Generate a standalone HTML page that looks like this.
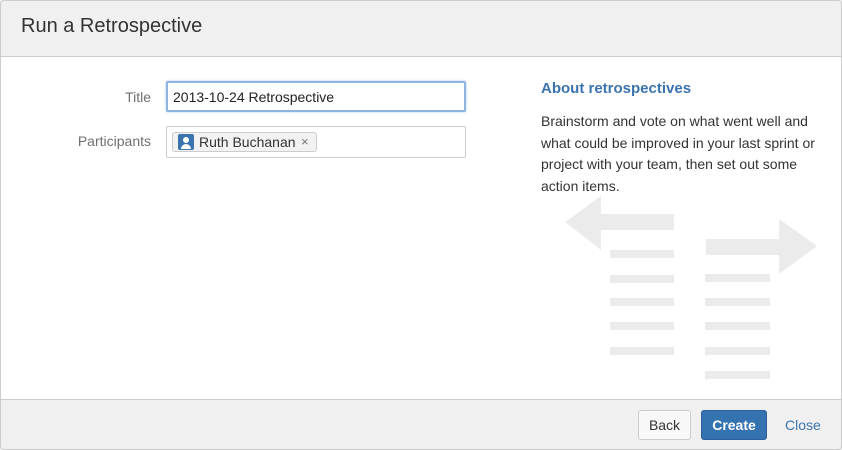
<!DOCTYPE html>
<html><head><style>
*{margin:0;padding:0;box-sizing:border-box}
body{width:842px;height:450px;background:#fff;font-family:"Liberation Sans",Arial,sans-serif;color:#333;position:relative;overflow:hidden}
.frame{position:absolute;left:0;top:0;width:842px;height:450px;overflow:hidden}
.bd{position:absolute;left:0;top:0;width:842px;height:450px;border:1px solid #ccc;border-radius:4px;pointer-events:none}
.hdr{position:absolute;left:0;top:0;width:842px;height:57px;background:#f0f0f0;border-bottom:1px solid #ccc}
.hdr h1{position:absolute;left:21px;top:15px;font-size:20px;font-weight:normal;color:#333}
.lbl{position:absolute;font-size:14px;color:#707070;text-align:right;width:130px;left:21px}
.inp{position:absolute;left:166px;width:300px;height:31px;border:1px solid #ccc;border-radius:2px;background:#fff;font-size:14px}
.inp.f{border:2px solid #8fb4e0;box-shadow:0 0 2px #a8c8ee}
.tag{position:absolute;left:5px;top:5px;height:20px;width:145px;border:1px solid #ccc;border-radius:3px;background:#f2f2f2;font-size:14px}
.av{position:absolute;left:5px;top:1px;width:16px;height:16px;background:#3b73af;border-radius:2px;overflow:hidden}
.ft{position:absolute;left:0;top:399px;width:842px;height:51px;background:#f0f0f0;border-top:1px solid #ccc}
.btn{position:absolute;top:10px;height:30px;border-radius:3px;font-size:14px;text-align:center;line-height:28px}
</style></head><body>
<div class="frame">
<div class="hdr"><h1>Run a Retrospective</h1></div>
<div class="lbl" style="top:89px">Title</div>
<div class="inp f" style="top:81px"><span style="position:absolute;left:5px;top:6px;color:#222">2013-10-24 Retrospective</span></div>
<div class="lbl" style="top:133px">Participants</div>
<div class="inp" style="top:126px;height:32px"><div class="tag"><div class="av"><div style="position:absolute;left:5px;top:3px;width:6px;height:6px;border-radius:50%;background:#fff"></div><div style="position:absolute;left:3px;top:10px;width:10px;height:5px;border-radius:5px 5px 0 0;background:#fff"></div></div><span style="position:absolute;left:26px;top:1px;color:#333">Ruth Buchanan</span><span style="position:absolute;left:128px;top:1px;color:#777;font-size:13px">×</span></div></div>
<div style="position:absolute;left:541px;top:80px;font-size:15px;font-weight:bold;color:#3b73af">About retrospectives</div>
<div style="position:absolute;left:541px;top:111px;width:290px;font-size:14px;line-height:21.5px;color:#333">Brainstorm and vote on what went well and what could be improved in your last sprint or project with your team, then set out some action items.</div>
<svg style="position:absolute;left:0;top:0" width="842" height="450">
<g fill="#ebebeb">
<polygon points="565,222 601,196 601,214 674,214 674,230 601,230 601,250"/>
<polygon points="706,239 779,239 779,219 817,246 779,274 779,255 706,255"/>
<rect x="610" y="250" width="64" height="8"/><rect x="610" y="275" width="64" height="8"/><rect x="610" y="298" width="64" height="8"/><rect x="610" y="322" width="64" height="8"/><rect x="610" y="347" width="64" height="8"/>
<rect x="705" y="274" width="65" height="8"/><rect x="705" y="298" width="65" height="8"/><rect x="705" y="322" width="65" height="8"/><rect x="705" y="347" width="65" height="8"/><rect x="705" y="371" width="65" height="8"/>
</g></svg>
<div class="ft">
<div class="btn" style="left:638px;width:53px;border:1px solid #ccc;background:#f8f8f8;color:#333">Back</div>
<div class="btn" style="left:701px;width:66px;background:#3572b0;border:1px solid #2a5f99;color:#fff;font-weight:bold">Create</div>
<div style="position:absolute;left:785px;top:17px;font-size:14px;color:#3b73af">Close</div>
</div>
</div>
<div class="bd"></div>
</body></html>
